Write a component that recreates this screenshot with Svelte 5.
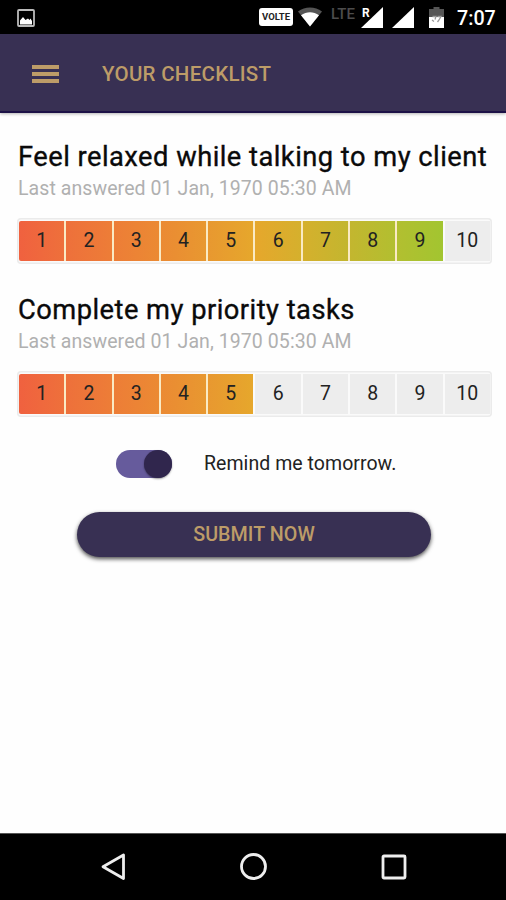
<script lang="ts">
  interface Question {
    id: string;
    title: string;
    answered: string;
    score: number;
  }

  let questions = $state<Question[]>([
    { id: 'relaxed', title: 'Feel relaxed while talking to my client', answered: '01 Jan, 1970 05:30 AM', score: 9 },
    { id: 'priority', title: 'Complete my priority tasks', answered: '01 Jan, 1970 05:30 AM', score: 5 },
  ]);
  let remind = $state(true);

  const steps = Array.from({ length: 10 }, (_, i) => i + 1);

  // Start colour of every step; the next entry is where its gradient ends.
  const ramp = ['#f0613f', '#ee703b', '#ed7d37', '#eb8a33', '#e89830', '#e6a72c', '#d5b02d', '#c3b62f', '#b2bf30', '#a2c530', '#8ccb2e'];
  const fill = (n: number) => `linear-gradient(90deg, ${ramp[n - 1]}, ${ramp[n]})`;
</script>

<div class="screen">
  <div class="status">
    <svg class="picture" width="18" height="18" viewBox="0 0 18 18">
      <rect x="1" y="1" width="16" height="16" rx="1" fill="none" stroke="#bbb" stroke-width="1.8" />
      <path d="M3 15.500v-4l3-3.500 2.500 3L11 9.500l1.500 1.500 1-1.500 1.500 2.500v3.500z" fill="#fff" />
    </svg>
    <span class="volte">VOLTE</span>
    <svg class="wifi" width="24" height="20" viewBox="0 0 24 20">
      <path d="M0 4.500C7-0.800 17-0.800 24 4.500L12 19.500z" fill="#555" />
      <path d="M3 8.300c5.500-4 12.500-4 18 0L12 19.500z" fill="#fff" />
    </svg>
    <span class="lte">LTE</span>
    <div class="signal">
      <svg width="22" height="21" viewBox="0 0 22 21"><path d="M22 0v21H0z" fill="#fff" /></svg>
      <span class="roaming">R</span>
    </div>
    <svg class="signal-two" width="22" height="21" viewBox="0 0 22 21"><path d="M22 0v21H0z" fill="#fff" /></svg>
    <svg class="battery" width="15" height="21" viewBox="0 0 15 21">
      <path d="M4.500 0h6v2H15v8H0V2h4.500z" fill="#555" />
      <path d="M0 10h15v11H0z" fill="#fff" />
      <path d="M3.500 9.500h3.500l-1 3M8.500 9.500H12l-2 3.500-1.500 2M3 13l2 1.500" fill="none" stroke="#999" stroke-width="1.300" />
    </svg>
    <span class="clock">7:07</span>
  </div>

  <header>
    <button class="menu" aria-label="Menu"><i></i><i></i><i></i></button>
    <h1>YOUR CHECKLIST</h1>
  </header>

  <main>
    {#each questions as q (q.id)}
      <section>
        <h2>{q.title}</h2>
        <p class="answered">Last answered {q.answered}</p>
        <div class="scale">
          {#each steps as n (n)}
            <button
              class="step"
              class:on={n < q.score}
              style:background={n <= q.score ? fill(n) : null}
              onclick={() => (q.score = n)}
            >{n}</button>
          {/each}
        </div>
      </section>
    {/each}

    <div class="remind">
      <button class="switch" class:off={!remind} role="switch" aria-checked={remind} aria-label="Remind me tomorrow" onclick={() => (remind = !remind)}>
        <span class="knob"></span>
      </button>
      <span class="remind-label">Remind me tomorrow.</span>
    </div>

    <button class="submit">SUBMIT NOW</button>
  </main>

  <nav>
    <svg width="26" height="28" viewBox="0 0 26 28"><path d="M22.500 2v23.500L2 13.700z" /></svg>
    <svg width="28" height="28" viewBox="0 0 28 28"><circle cx="13.500" cy="13.500" r="12" /></svg>
    <svg width="26" height="26" viewBox="0 0 26 26"><rect x="2" y="2" width="22" height="22" rx="1" /></svg>
  </nav>
</div>

<style>
  :global(body) {
    margin: 0;
    background: #fff;
  }
  .screen {
    width: 506px;
    height: 900px;
    display: flex;
    flex-direction: column;
    overflow: hidden;
    background: #fefefe;
    color: #222;
    font-family: Roboto, sans-serif;
  }
  button {
    border: 0;
    padding: 0;
    font: inherit;
    color: inherit;
    background: none;
  }
  .status {
    height: 34px;
    flex: none;
    box-sizing: border-box;
    display: flex;
    align-items: flex-start;
    padding: 7px 0 0 17px;
    background: #000;
    color: #fff;
  }
  .picture {
    margin: 2px 224px 0 0;
  }
  .volte {
    width: 34px;
    height: 18px;
    margin: 1px 5px 0 0;
    border-radius: 3px;
    background: #fff;
    color: #222;
    font-size: 9.5px;
    font-weight: 700;
    line-height: 18px;
    text-align: center;
  }
  .wifi {
    margin-right: 9px;
  }
  .lte {
    width: 26px;
    margin-right: 4px;
    color: #4c4c4c;
    font-size: 15px;
    font-weight: 500;
    line-height: 14px;
  }
  .signal {
    position: relative;
    height: 21px;
    margin-right: 9px;
  }
  .signal svg {
    display: block;
  }
  .roaming {
    position: absolute;
    left: 1px;
    top: 0;
    font-size: 12px;
    font-weight: 700;
    line-height: 13px;
  }
  .signal-two {
    margin-right: 15px;
  }
  .clock {
    margin-left: 13px;
    font-size: 19.7px;
    font-weight: 500;
    line-height: 24px;
  }
  header {
    height: 79px;
    flex: none;
    box-sizing: border-box;
    display: flex;
    align-items: center;
    padding: 2px 0 0 32px;
    background: #383053;
    border-bottom: 2px solid #1c1146;
    box-shadow: 0 1px 3px rgba(0, 0, 0, 0.3);
    color: #bd9c68;
  }
  .menu {
    width: 27px;
    display: flex;
    flex-direction: column;
    gap: 3px;
    margin-right: 43px;
  }
  .menu i {
    height: 4px;
    background: #bd9c68;
  }
  h1 {
    margin: 0;
    font-size: 20.5px;
    font-weight: 500;
    line-height: 24px;
    letter-spacing: 0.28px;
  }
  main {
    flex: 1;
    display: flex;
    flex-direction: column;
    padding: 28px 14px 0 17px;
  }
  section {
    margin-bottom: 30px;
  }
  h2 {
    margin: 0 0 0 1px;
    font-size: 27.3px;
    font-weight: 400;
    line-height: 32px;
    letter-spacing: 0.47px;
    white-space: nowrap;
    color: #0a0a0a;
    -webkit-text-stroke: 0.35px #0a0a0a;
  }
  .answered {
    margin: 1px 0 14px 1px;
    font-size: 19.5px;
    line-height: 30px;
    letter-spacing: 0.08px;
    color: #b0b0b0;
  }
  .scale {
    height: 46px;
    box-sizing: border-box;
    display: flex;
    gap: 2px;
    padding: 3px 2px;
    border-radius: 4px;
    background: #fafafa;
    box-shadow: inset 0 0 0 1.5px #ebebeb;
  }
  .step {
    flex: 1 1 0;
    background: #ededed;
    font-size: 19.5px;
    line-height: 38px;
  }
  /* warm hairline between two selected steps */
  .step.on {
    box-shadow: 2px 0 0 #faeac4;
  }
  .step:first-child {
    border-radius: 2px 0 0 2px;
  }
  .remind {
    display: flex;
    align-items: center;
    margin: 2px 0 0 99px;
    height: 29px;
  }
  .switch {
    display: flex;
    justify-content: flex-end;
    width: 56px;
    height: 28px;
    margin-right: 32px;
    border-radius: 14px;
    background: #665b9c;
  }
  .switch.off {
    justify-content: flex-start;
    background: #bbb;
  }
  .knob {
    width: 28px;
    height: 28px;
    border-radius: 50%;
    background: #30264d;
    box-shadow: 0 1px 2px rgba(0, 0, 0, 0.4);
  }
  .remind-label {
    font-size: 19.5px;
    letter-spacing: 0.05px;
  }
  .submit {
    width: 354px;
    height: 45px;
    margin: 34px 0 0 60px;
    border-radius: 23px;
    background: #383053;
    box-shadow: 0 2px 4px rgba(0, 0, 0, 0.7);
    color: #bd9c68;
    font-size: 19.7px;
    font-weight: 500;
    letter-spacing: 0.05px;
  }
  nav {
    height: 67px;
    flex: none;
    box-sizing: border-box;
    display: flex;
    align-items: center;
    justify-content: space-between;
    padding: 0 99px 0 101px;
    background: #000;
    border-top: 1px solid #555;
  }
  nav svg {
    fill: none;
    stroke: #eee;
    stroke-width: 2.8;
    stroke-linejoin: round;
  }
</style>
